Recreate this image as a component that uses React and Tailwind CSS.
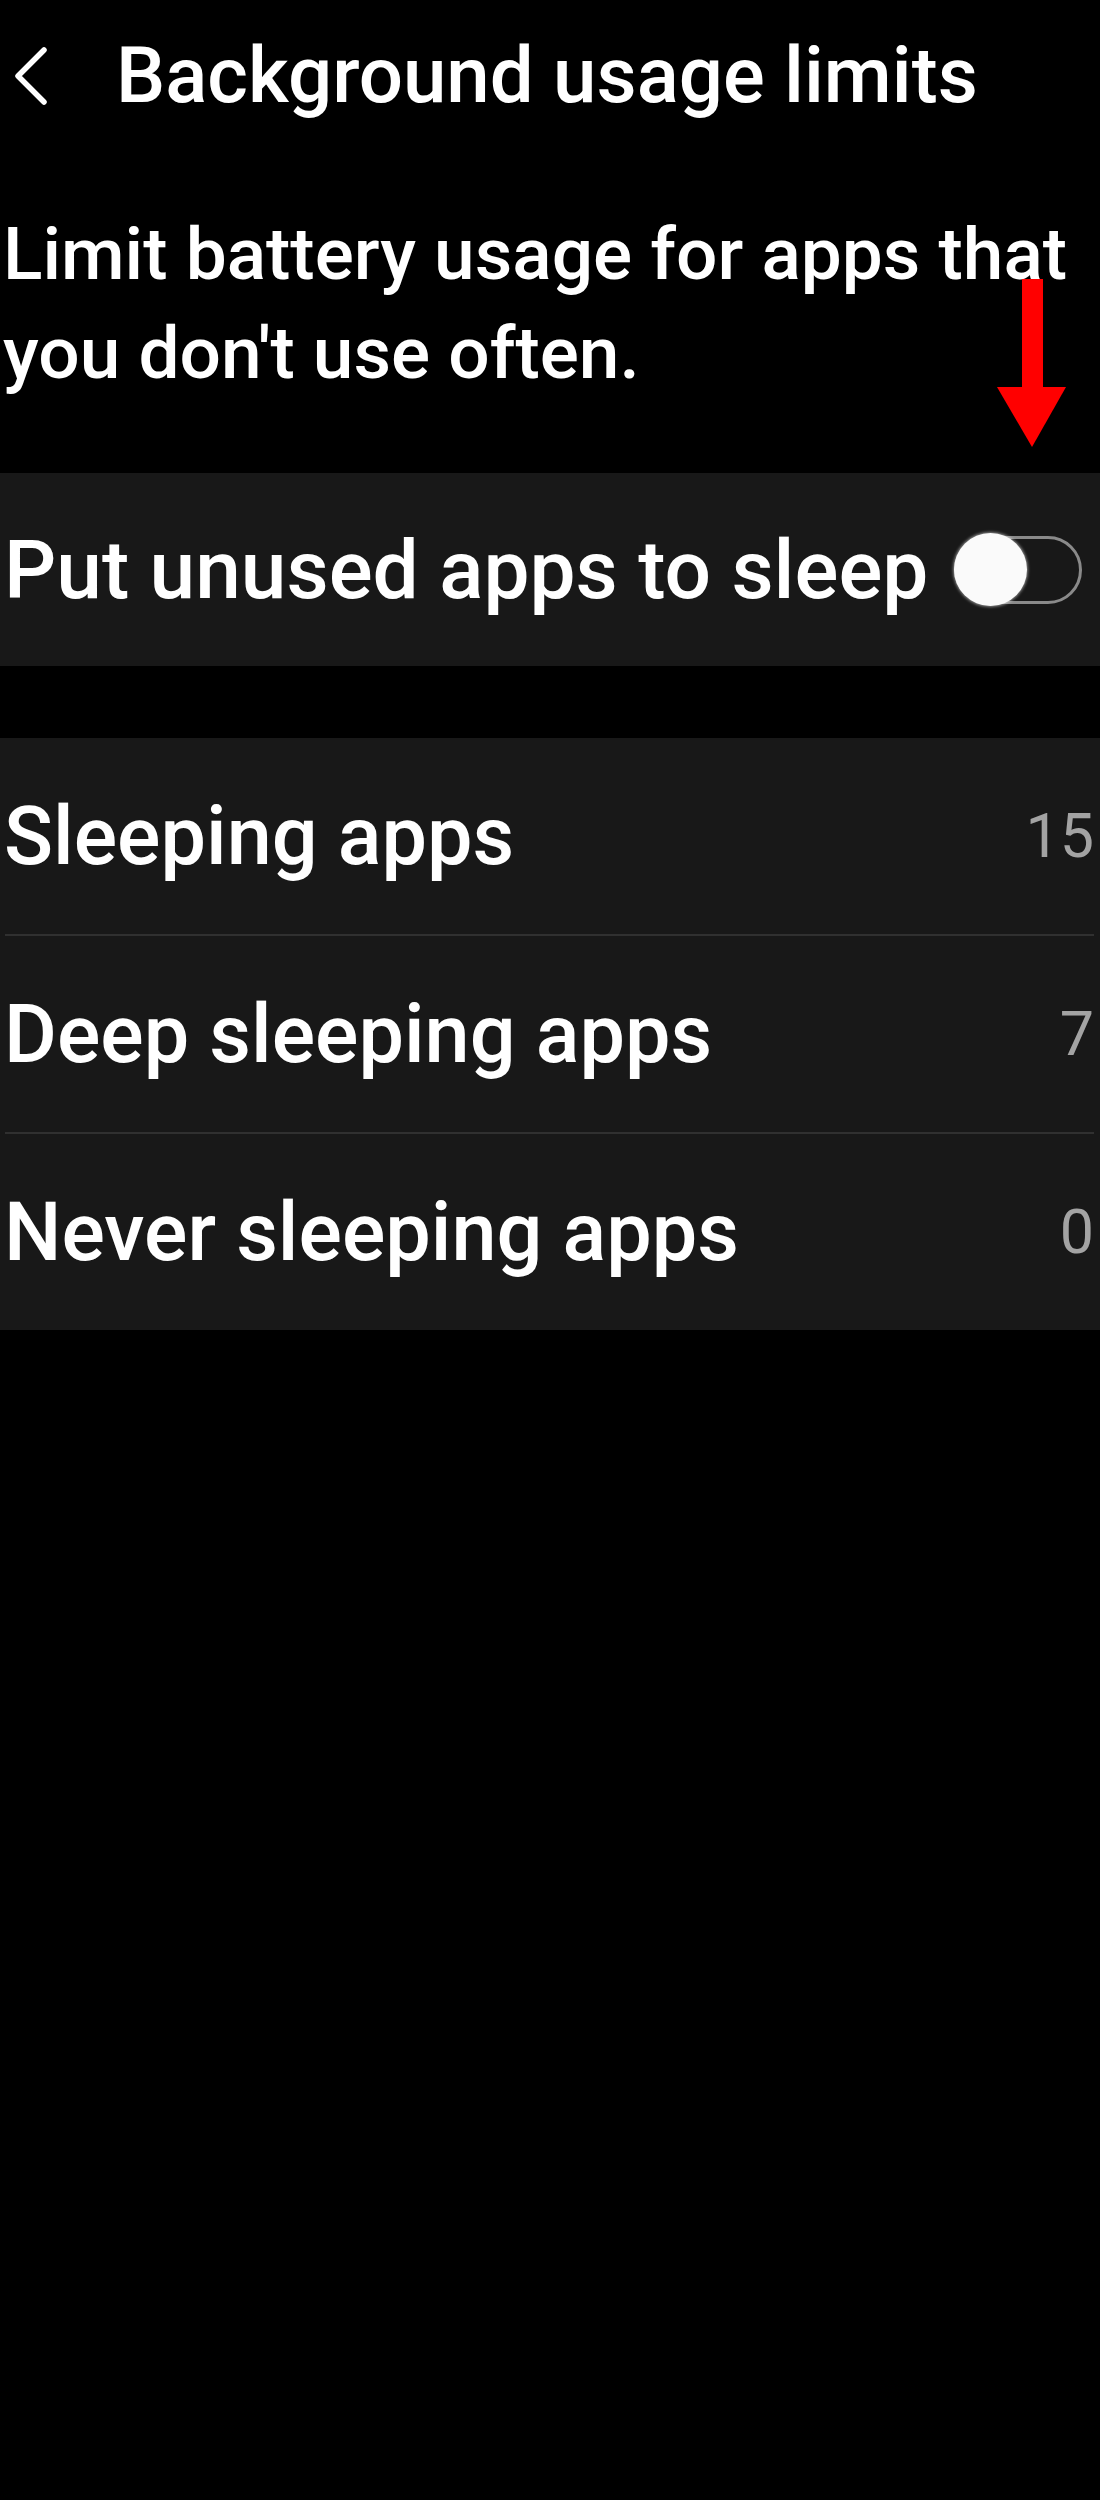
import React from "react";

const font = { fontFamily: "Roboto, 'Noto Sans', sans-serif" };

function Toggle() {
  return (
    <div className="relative w-[130px] h-[74px] flex items-center shrink-0">
      <div className="absolute left-0 right-[2px] top-[3px] bottom-[3px] rounded-full border-[3px] border-[#8a8a8a]" />
      <div className="relative w-[73px] h-[73px] rounded-full bg-[#fafafa] shadow-[0_0_3px_1px_rgba(255,255,255,0.5)]" />
    </div>
  );
}

function Row({ label, count, last }) {
  return (
    <div className="flex flex-col">
      <div className="h-[196px] flex items-center justify-between pl-[4px] pr-[6px]">
        <span className="text-[81px] font-medium text-white leading-none">{label}</span>
        <span className="text-[61px] text-[#a3a3a3] leading-none">{count}</span>
      </div>
      {!last && <div className="h-[2px] bg-[#303030] ml-[5px] mr-[6px]" />}
    </div>
  );
}

export default function App() {
  return (
    <div className="relative w-[1100px] min-h-[2500px] bg-black text-white" style={font}>
      <div className="h-[152px] flex items-center">
        <svg className="ml-[10px] w-[42px] h-[62px]" viewBox="0 0 42 62" fill="none">
          <path d="M34 5 L8 31 L34 57" stroke="white" strokeWidth="5.5" strokeLinecap="round" strokeLinejoin="round" />
        </svg>
        <h1 className="ml-[64px] text-[78px] font-medium leading-none">Background usage limits</h1>
      </div>
      <p className="mt-[53px] text-[73px] font-medium leading-[99px] pl-[3px] pr-[10px]">
        Limit battery usage for apps that you don't use often.
      </p>
      <div className="mt-[70px] h-[193px] bg-[#181818] flex items-center justify-between pl-[4px] pr-[16px]">
        <span className="text-[82px] font-medium leading-none">Put unused apps to sleep</span>
        <Toggle />
      </div>
      <div className="mt-[72px] bg-[#181818] flex flex-col">
        <Row label="Sleeping apps" count="15" />
        <Row label="Deep sleeping apps" count="7" />
        <Row label="Never sleeping apps" count="0" last />
      </div>
      <svg className="absolute left-[997px] top-[279px] w-[69px] h-[168px]" viewBox="0 0 69 168">
        <rect x="25" y="0" width="21" height="110" fill="#ff0000" />
        <polygon points="0,108 69,108 35,168" fill="#ff0000" />
      </svg>
    </div>
  );
}
